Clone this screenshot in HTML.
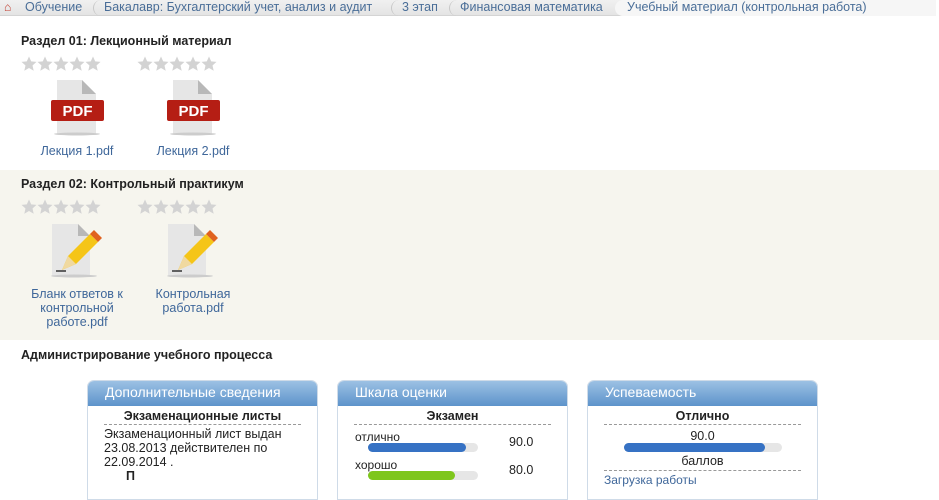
<!DOCTYPE html>
<html><head><meta charset="utf-8"><style>
*{margin:0;padding:0;box-sizing:border-box}
body{width:939px;height:484px;overflow:hidden;background:#fff;font-family:"Liberation Sans","DejaVu Sans",sans-serif;font-size:12px;color:#222;position:relative}
.bc{position:absolute;left:0;top:0;width:936px;height:16px;background:linear-gradient(#f0f0f0,#e4e4e4);border-bottom:1px solid #d4d4d4;font-size:12.5px;color:#4a6e98;white-space:nowrap}
.bc span{position:absolute;top:0;line-height:14px}
.bc .sep{width:10px;height:16px;border-left:1px solid #c8c8c8;border-radius:8px 0 0 8px}
.bc .last{background:#f6f6f6;height:16px;padding-left:12px;border-radius:8px 0 0 8px}
.sec2{position:absolute;left:0;top:170px;width:939px;height:170px;background:#f6f5ee}
.t{position:absolute;font-weight:bold;font-size:12.5px;color:#222}
.stars{position:absolute}
.lbl{position:absolute;color:#3f679a;font-size:12.5px;text-align:center;line-height:14px}
.box{position:absolute;top:380px;width:231px;height:120px;border:1px solid #cfdbe8;border-radius:7px 7px 0 0;background:#fff}
.box .h{height:25px;background:linear-gradient(#9cc1e4,#5d93cb);border-radius:6px 6px 0 0;color:#fff;font-size:14px;padding:3px 0 0 17px}
.box .st{text-align:center;font-weight:bold;font-size:12.5px;margin:3px 16px 0;border-bottom:1px dashed #999;padding-bottom:1px}
.bar{position:absolute;height:9px;border-radius:5px;background:#e6e6e6}
.bar i{display:block;height:9px;border-radius:5px}
</style></head><body>
<svg width="0" height="0" style="position:absolute"><defs><symbol id="s" viewBox="0 0 16 16"><path d="M8 0.5l2.2 4.9 5.3.5-4 3.6 1.2 5.2L8 12l-4.7 2.7 1.2-5.2-4-3.6 5.3-.5z" fill="#d3d3d3"/></symbol></defs></svg>
<div class="bc">
<span style="left:4px;color:#c0392b;font-size:12px">⌂</span>
<span style="left:25px">Обучение</span>
<span class="sep" style="left:93px"></span><span style="left:104px">Бакалавр: Бухгалтерский учет, анализ и аудит</span>
<span class="sep" style="left:391px"></span><span style="left:402px">3 этап</span>
<span class="sep" style="left:449px"></span><span style="left:460px">Финансовая математика</span>
<span class="last" style="left:615px;width:321px">Учебный материал (контрольная работа)</span>
</div>

<div class="t" style="left:21px;top:34px">Раздел 01: Лекционный материал</div>
<svg class="stars" style="left:21px;top:56px" width="80" height="16"><use href="#s" x="0" width="16" height="16"/><use href="#s" x="16" width="16" height="16"/><use href="#s" x="32" width="16" height="16"/><use href="#s" x="48" width="16" height="16"/><use href="#s" x="64" width="16" height="16"/></svg>
<svg class="stars" style="left:137px;top:56px" width="80" height="16"><use href="#s" x="0" width="16" height="16"/><use href="#s" x="16" width="16" height="16"/><use href="#s" x="32" width="16" height="16"/><use href="#s" x="48" width="16" height="16"/><use href="#s" x="64" width="16" height="16"/></svg>
<svg style="position:absolute;left:48px;top:78px" width="60" height="60"><path d="M9 2h25l14 14v40H9z" fill="#e6e6e6"/><path d="M34 2v14h14z" fill="#b8b8b8"/><rect x="3" y="22" width="53" height="21" rx="2" fill="#b51e14"/><text x="29.5" y="38" text-anchor="middle" fill="#fff" font-weight="bold" font-size="15" font-family="Liberation Sans">PDF</text><ellipse cx="29" cy="56" rx="23" ry="1.5" fill="#ccc"/></svg>
<svg style="position:absolute;left:164px;top:78px" width="60" height="60"><path d="M9 2h25l14 14v40H9z" fill="#e6e6e6"/><path d="M34 2v14h14z" fill="#b8b8b8"/><rect x="3" y="22" width="53" height="21" rx="2" fill="#b51e14"/><text x="29.5" y="38" text-anchor="middle" fill="#fff" font-weight="bold" font-size="15" font-family="Liberation Sans">PDF</text><ellipse cx="29" cy="56" rx="23" ry="1.5" fill="#ccc"/></svg>
<div class="lbl" style="left:27px;top:144px;width:100px">Лекция 1.pdf</div>
<div class="lbl" style="left:143px;top:144px;width:100px">Лекция 2.pdf</div>

<div class="sec2"></div>
<div class="t" style="left:21px;top:177px">Раздел 02: Контрольный практикум</div>
<svg class="stars" style="left:21px;top:199px" width="80" height="16"><use href="#s" x="0" width="16" height="16"/><use href="#s" x="16" width="16" height="16"/><use href="#s" x="32" width="16" height="16"/><use href="#s" x="48" width="16" height="16"/><use href="#s" x="64" width="16" height="16"/></svg>
<svg class="stars" style="left:137px;top:199px" width="80" height="16"><use href="#s" x="0" width="16" height="16"/><use href="#s" x="16" width="16" height="16"/><use href="#s" x="32" width="16" height="16"/><use href="#s" x="48" width="16" height="16"/><use href="#s" x="64" width="16" height="16"/></svg>
<svg style="position:absolute;left:48px;top:222px" width="60" height="56"><path d="M4 2h26l12 12v40H4z" fill="#e6e6e6"/><path d="M30 2v12h12z" fill="#b8b8b8"/><path d="M14 48l6-14 22-22 8 8-22 22z" fill="#f5c518"/><path d="M42 12l4-4 8 8-4 4z" fill="#e0621f"/><path d="M14 48l6-14 8 8z" fill="#f0d9a0"/><path d="M8 49h10" stroke="#333" stroke-width="1.5"/><ellipse cx="26" cy="54" rx="23" ry="1.5" fill="#ccc"/></svg>
<svg style="position:absolute;left:164px;top:222px" width="60" height="56"><path d="M4 2h26l12 12v40H4z" fill="#e6e6e6"/><path d="M30 2v12h12z" fill="#b8b8b8"/><path d="M14 48l6-14 22-22 8 8-22 22z" fill="#f5c518"/><path d="M42 12l4-4 8 8-4 4z" fill="#e0621f"/><path d="M14 48l6-14 8 8z" fill="#f0d9a0"/><path d="M8 49h10" stroke="#333" stroke-width="1.5"/><ellipse cx="26" cy="54" rx="23" ry="1.5" fill="#ccc"/></svg>
<div class="lbl" style="left:20px;top:287px;width:114px">Бланк ответов к контрольной работе.pdf</div>
<div class="lbl" style="left:143px;top:287px;width:100px">Контрольная работа.pdf</div>

<div class="t" style="left:21px;top:348px">Администрирование учебного процесса</div>

<div class="box" style="left:87px"><div class="h">Дополнительные сведения</div>
<div class="st">Экзаменационные листы</div>
<div style="padding:2px 0 0 16px;line-height:14px;font-size:12.5px">Экзаменационный лист выдан<br>23.08.2013 действителен по<br>22.09.2014 .<br><b style="padding-left:22px">П</b></div></div>

<div class="box" style="left:337px"><div class="h">Шкала оценки</div>
<div class="st">Экзамен</div>
<div style="position:absolute;left:17px;top:49px">отлично</div>
<div style="position:absolute;left:171px;top:54px;font-size:12.5px">90.0</div>
<div class="bar" style="left:30px;top:62px;width:110px"><i style="width:98px;background:#3672c4"></i></div>
<div style="position:absolute;left:17px;top:77px">хорошо</div>
<div style="position:absolute;left:171px;top:82px;font-size:12.5px">80.0</div>
<div class="bar" style="left:30px;top:90px;width:110px"><i style="width:87px;background:#7ec61c"></i></div>
</div>

<div class="box" style="left:587px"><div class="h">Успеваемость</div>
<div class="st">Отлично</div>
<div style="position:absolute;left:0;width:229px;top:48px;text-align:center;font-size:12.5px">90.0</div>
<div class="bar" style="left:36px;top:62px;width:158px"><i style="width:141px;background:#3672c4"></i></div>
<div style="position:absolute;left:16px;width:197px;top:73px;text-align:center;border-bottom:1px dashed #999;line-height:14px;padding-bottom:2px;font-size:12.5px">баллов</div>
<div style="position:absolute;left:16px;top:92px;color:#3f679a;line-height:14px">Загрузка работы</div>
</div>
</body></html>
